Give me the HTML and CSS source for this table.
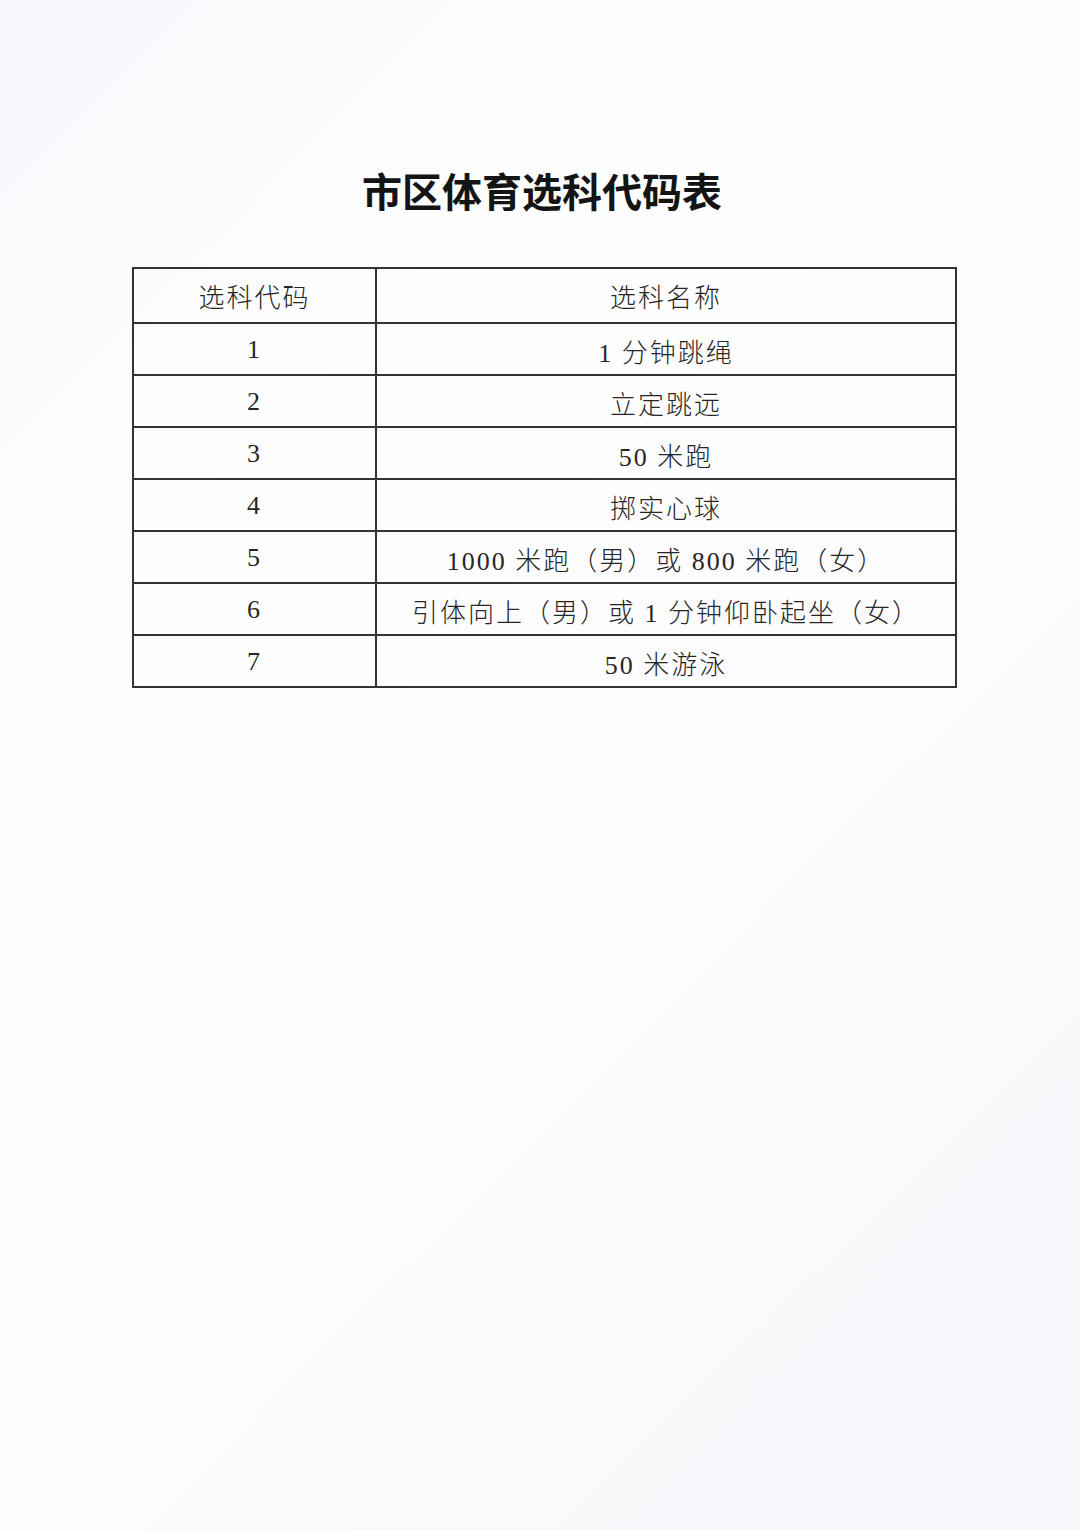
FILE: index.html
```html
<!DOCTYPE html>
<html lang="zh">
<head>
<meta charset="utf-8">
<link rel="stylesheet" href="styles.css">
</head>
<body>
<div class="page">
  <h1 class="title">市区体育选科代码表</h1>
  <table class="codes">
    <tr class="head"><td class="c1">选科代码</td><td class="c2">选科名称</td></tr>
    <tr><td class="c1">1</td><td class="c2">1 分钟跳绳</td></tr>
    <tr><td class="c1">2</td><td class="c2">立定跳远</td></tr>
    <tr><td class="c1">3</td><td class="c2">50 米跑</td></tr>
    <tr><td class="c1">4</td><td class="c2">掷实心球</td></tr>
    <tr><td class="c1">5</td><td class="c2">1000 米跑（男）或 800 米跑（女）</td></tr>
    <tr><td class="c1">6</td><td class="c2">引体向上（男）或 1 分钟仰卧起坐（女）</td></tr>
    <tr><td class="c1">7</td><td class="c2">50 米游泳</td></tr>
  </table>
</div>
</body>
</html>
```
FILE: styles.css
```css
html, body {
  margin: 0;
  padding: 0;
  background: #fcfcfe;
}
.page {
  width: 1080px;
  height: 1530px;
  padding-top: 165px;
  box-sizing: border-box;
  background: linear-gradient(135deg, #f7f8fc 0%, #fefefe 30%, #fcfcfe 60%, #f6f7fb 100%);
}
.title {
  margin: 0;
  text-align: center;
  font-family: "Noto Sans CJK SC", sans-serif;
  font-weight: 700;
  font-size: 40px;
  line-height: 50px;
  letter-spacing: 0px;
  color: #141414;
  padding-left: 4px;
}
.codes {
  margin: 52px 0 0 132px;
  width: 825px;
  border-collapse: collapse;
  font-family: "Liberation Serif", "Noto Sans CJK SC", serif;
  font-size: 26px;
  color: #262626;
}
.codes td {
  border: 2px solid #333333;
  height: 48px;
  padding: 2px 0 0 0;
  text-align: center;
  vertical-align: middle;
  letter-spacing: 2px;
  font-weight: 300;
}
.codes .head td {
  height: 53px;
  padding-top: 0;
}
.codes .c1 {
  width: 241px;
}
```
